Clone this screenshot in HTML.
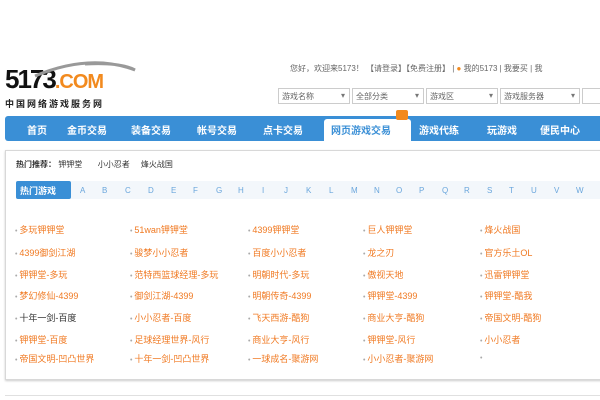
<!DOCTYPE html>
<html><head><meta charset="utf-8"><style>
*{margin:0;padding:0;box-sizing:border-box}
body{width:600px;height:400px;background:#fff;position:relative;overflow:hidden;font-family:"Liberation Sans","Noto Sans CJK SC",sans-serif;font-size:9px;color:#333}
.a{position:absolute;white-space:nowrap}
.nav{position:absolute;left:5px;top:116px;width:600px;height:25px;background:#3a8fd6;border-radius:3px}
.nav span{position:absolute;top:6px;color:#fff;font-size:10px;font-weight:bold}
.sel{position:absolute;top:88px;height:16px;border:1px solid #ccc;background:#fff;font-size:8px;color:#666;padding:2px 3px}
.sel:after{content:"▾";position:absolute;right:4px;top:2px;color:#777}
.box{position:absolute;left:5px;top:150px;width:600px;height:230px;border:1px solid #d8d8d8;box-shadow:0 1px 2px #ccc}
.g{position:absolute;color:#f07a23;font-size:9px}
.g:before{content:"• ";color:#aaa;font-size:7px}
.l{position:absolute;top:186px;color:#6aa6dc;font-size:8px}
</style></head><body>
<div class="a" style="left:5px;top:64px;font-size:26px;font-weight:900;letter-spacing:-2px;color:#111;font-family:'Liberation Sans',sans-serif">5173<span style="color:#f28a1e;font-size:20px;letter-spacing:-1px">.COM</span></div>
<svg class="a" style="left:30px;top:58px" width="110" height="30"><path d="M5 18 Q60 -5 105 12 Q90 4 55 6" stroke="#999" stroke-width="3" fill="none"/></svg>
<div class="a" style="left:5px;top:97px;font-size:9px;font-weight:bold;letter-spacing:2px;color:#222">中国网络游戏服务网</div>
<div class="a" style="left:290px;top:63px;font-size:8px;color:#666">您好，欢迎来5173！ 【请登录】【免费注册】 | <span style="color:#f28a1e">●</span> 我的5173 | 我要买 | 我</div>
<div class="sel" style="left:278px;width:72px">游戏名称</div>
<div class="sel" style="left:352px;width:72px">全部分类</div>
<div class="sel" style="left:426px;width:72px">游戏区</div>
<div class="sel" style="left:500px;width:80px">游戏服务器</div>
<div class="sel" style="left:582px;width:30px"></div>
<div class="nav">
<span style="left:22px">首页</span><span style="left:62px">金币交易</span><span style="left:126px">装备交易</span><span style="left:192px">帐号交易</span><span style="left:258px">点卡交易</span>
<div style="position:absolute;left:319px;top:3px;width:87px;height:23px;background:#fff;border-radius:3px 3px 0 0"></div>
<span style="left:326px;color:#3a8fd6">网页游戏交易</span><span style="left:414px">游戏代练</span><span style="left:482px">玩游戏</span><span style="left:535px">便民中心</span>
</div>
<div class="a" style="left:396px;top:110px;width:12px;height:10px;background:#f28a1e;border-radius:2px"></div>
<div class="box"></div>
<div class="a" style="left:16px;top:159px;font-size:8px;font-weight:bold">热门推荐： <span style="font-weight:normal">钾钾堂 &nbsp;&nbsp;&nbsp;&nbsp;&nbsp; 小小忍者 &nbsp;&nbsp;&nbsp; 烽火战国</span></div>
<div class="a" style="left:16px;top:181px;width:590px;height:18px;background:#f3f7fb"></div>
<div class="a" style="left:16px;top:181px;width:55px;height:18px;background:#3a8fd6;border-radius:2px;color:#fff;font-size:9px;font-weight:bold;padding:3px 4px">热门游戏</div>
<div class="l" style="left:80px">A</div><div class="l" style="left:102px">B</div><div class="l" style="left:125px">C</div><div class="l" style="left:148px">D</div><div class="l" style="left:171px">E</div><div class="l" style="left:193px">F</div><div class="l" style="left:216px">G</div><div class="l" style="left:238px">H</div><div class="l" style="left:262px">I</div><div class="l" style="left:284px">J</div><div class="l" style="left:306px">K</div><div class="l" style="left:329px">L</div><div class="l" style="left:351px">M</div><div class="l" style="left:374px">N</div><div class="l" style="left:396px">O</div><div class="l" style="left:419px">P</div><div class="l" style="left:442px">Q</div><div class="l" style="left:464px">R</div><div class="l" style="left:487px">S</div><div class="l" style="left:509px">T</div><div class="l" style="left:531px">U</div><div class="l" style="left:554px">V</div><div class="l" style="left:576px">W</div>
<div class="g" style="left:15px;top:223px">多玩钾钾堂</div><div class="g" style="left:130px;top:223px">51wan钾钾堂</div><div class="g" style="left:248px;top:223px">4399钾钾堂</div><div class="g" style="left:363px;top:223px">巨人钾钾堂</div><div class="g" style="left:480px;top:223px">烽火战国</div>
<div class="g" style="left:15px;top:246px">4399御剑江湖</div><div class="g" style="left:130px;top:246px">骏梦小小忍者</div><div class="g" style="left:248px;top:246px">百度小小忍者</div><div class="g" style="left:363px;top:246px">龙之刃</div><div class="g" style="left:480px;top:246px">官方乐土OL</div>
<div class="g" style="left:15px;top:268px">钾钾堂-多玩</div><div class="g" style="left:130px;top:268px">范特西篮球经理-多玩</div><div class="g" style="left:248px;top:268px">明朝时代-多玩</div><div class="g" style="left:363px;top:268px">傲视天地</div><div class="g" style="left:480px;top:268px">迅雷钾钾堂</div>
<div class="g" style="left:15px;top:289px">梦幻修仙-4399</div><div class="g" style="left:130px;top:289px">御剑江湖-4399</div><div class="g" style="left:248px;top:289px">明朝传奇-4399</div><div class="g" style="left:363px;top:289px">钾钾堂-4399</div><div class="g" style="left:480px;top:289px">钾钾堂-酷我</div>
<div class="g" style="left:15px;top:311px;color:#333">十年一剑-百度</div><div class="g" style="left:130px;top:311px">小小忍者-百度</div><div class="g" style="left:248px;top:311px">飞天西游-酷狗</div><div class="g" style="left:363px;top:311px">商业大亨-酷狗</div><div class="g" style="left:480px;top:311px">帝国文明-酷狗</div>
<div class="g" style="left:15px;top:333px">钾钾堂-百度</div><div class="g" style="left:130px;top:333px">足球经理世界-风行</div><div class="g" style="left:248px;top:333px">商业大亨-风行</div><div class="g" style="left:363px;top:333px">钾钾堂-风行</div><div class="g" style="left:480px;top:333px">小小忍者</div>
<div class="g" style="left:15px;top:352px">帝国文明-凹凸世界</div><div class="g" style="left:130px;top:352px">十年一剑-凹凸世界</div><div class="g" style="left:248px;top:352px">一球成名-聚游网</div><div class="g" style="left:363px;top:352px">小小忍者-聚游网</div><div class="g" style="left:480px;top:352px"></div>
<div class="a" style="left:5px;top:395px;width:600px;height:1px;background:#e0e0e0"></div>
</body></html>
